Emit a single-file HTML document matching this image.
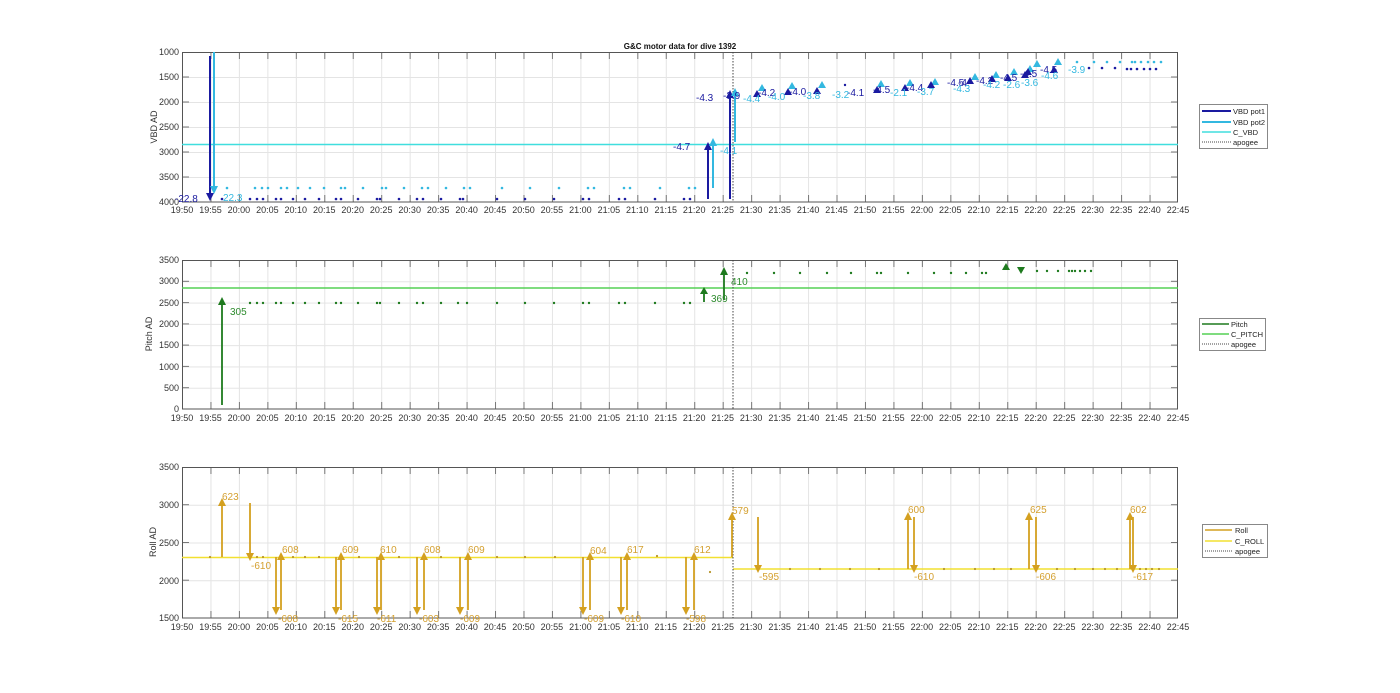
<!DOCTYPE html>
<html><head><meta charset="utf-8"><style>
html,body{margin:0;padding:0;background:#fff;}
svg{display:block;font-family:"Liberation Sans",Arial,sans-serif;}
.t{font-size:9px;fill:#333;text-anchor:middle}
.yl{font-size:9px;fill:#333;text-anchor:end}
.lg{font-size:7.5px;fill:#222}
</style></head><body>
<svg width="1400" height="693" viewBox="0 0 1400 693" xmlns="http://www.w3.org/2000/svg">
<defs>
<pattern id="vg" patternUnits="userSpaceOnUse" x="182" y="0" width="28.457" height="10"><line x1="0.5" y1="0" x2="0.5" y2="10" stroke="#e4e4e4" stroke-width="1"/></pattern>
<pattern id="h1" patternUnits="userSpaceOnUse" x="0" y="52" width="10" height="25"><line x1="0" y1="0.5" x2="10" y2="0.5" stroke="#e4e4e4"/></pattern>
<pattern id="h2" patternUnits="userSpaceOnUse" x="0" y="260" width="10" height="21.29"><line x1="0" y1="0.5" x2="10" y2="0.5" stroke="#e4e4e4"/></pattern>
<pattern id="h3" patternUnits="userSpaceOnUse" x="0" y="467" width="10" height="37.75"><line x1="0" y1="0.5" x2="10" y2="0.5" stroke="#e4e4e4"/></pattern>
<pattern id="tk" patternUnits="userSpaceOnUse" x="182" y="0" width="28.457" height="800"><line x1="0.5" y1="0" x2="0.5" y2="800" stroke="#777"/></pattern>
</defs>

<text x="680" y="49" style="font-size:8px;font-weight:bold;fill:#111" text-anchor="middle">G&amp;C motor data for dive 1392</text>

<!-- ============ TOP PLOT ============ -->
<rect x="182" y="52" width="996" height="150" fill="url(#vg)"/>
<rect x="182" y="52" width="996" height="150" fill="url(#h1)"/>
<rect x="182" y="52" width="996" height="7" fill="url(#tk)"/>
<rect x="182" y="195" width="996" height="7" fill="url(#tk)"/>
<g stroke="#777"><line x1="182" y1="77" x2="189" y2="77"/><line x1="182" y1="102" x2="189" y2="102"/><line x1="182" y1="127" x2="189" y2="127"/><line x1="182" y1="152" x2="189" y2="152"/><line x1="182" y1="177" x2="189" y2="177"/>
<line x1="1171" y1="77" x2="1178" y2="77"/><line x1="1171" y1="102" x2="1178" y2="102"/><line x1="1171" y1="127" x2="1178" y2="127"/><line x1="1171" y1="152" x2="1178" y2="152"/><line x1="1171" y1="177" x2="1178" y2="177"/></g>
<rect x="182.5" y="52.5" width="995" height="149.5" fill="none" stroke="#555"/>
<g class="yl"><text x="179" y="55">1000</text><text x="179" y="80">1500</text><text x="179" y="105">2000</text><text x="179" y="130">2500</text><text x="179" y="155">3000</text><text x="179" y="180">3500</text><text x="179" y="205">4000</text></g>
<text transform="translate(157,127) rotate(-90)" style="font-size:9px;fill:#333" text-anchor="middle">VBD AD</text>
<line x1="182" y1="144.5" x2="1178" y2="144.5" stroke="#40dede" stroke-width="1.5"/>
<line x1="733" y1="52" x2="733" y2="202" stroke="#444" stroke-dasharray="1.5,1.5"/>
<g fill="#1a1aa0">
<circle cx="222" cy="199" r="1.3"/><circle cx="250" cy="199" r="1.3"/><circle cx="257" cy="199" r="1.3"/><circle cx="263" cy="199" r="1.3"/><circle cx="276" cy="199" r="1.3"/><circle cx="281" cy="199" r="1.3"/><circle cx="293" cy="199" r="1.3"/><circle cx="305" cy="199" r="1.3"/><circle cx="319" cy="199" r="1.3"/><circle cx="336" cy="199" r="1.3"/><circle cx="341" cy="199" r="1.3"/><circle cx="358" cy="199" r="1.3"/><circle cx="377" cy="199" r="1.3"/><circle cx="380" cy="199" r="1.3"/><circle cx="399" cy="199" r="1.3"/><circle cx="417" cy="199" r="1.3"/><circle cx="423" cy="199" r="1.3"/><circle cx="441" cy="199" r="1.3"/><circle cx="460" cy="199" r="1.3"/><circle cx="463" cy="199" r="1.3"/><circle cx="497" cy="199" r="1.3"/><circle cx="525" cy="199" r="1.3"/><circle cx="554" cy="199" r="1.3"/><circle cx="583" cy="199" r="1.3"/><circle cx="589" cy="199" r="1.3"/><circle cx="619" cy="199" r="1.3"/><circle cx="625" cy="199" r="1.3"/><circle cx="655" cy="199" r="1.3"/><circle cx="684" cy="199" r="1.3"/><circle cx="690" cy="199" r="1.3"/>
<circle cx="1089" cy="68" r="1.3"/><circle cx="1102" cy="68" r="1.3"/><circle cx="1115" cy="68" r="1.3"/><circle cx="1127" cy="69" r="1.3"/><circle cx="1131" cy="69" r="1.3"/><circle cx="1137" cy="69" r="1.3"/><circle cx="1144" cy="69" r="1.3"/><circle cx="1150" cy="69" r="1.3"/><circle cx="1156" cy="69" r="1.3"/><circle cx="845" cy="85" r="1.2"/>
</g>
<g fill="#33b8e0">
<circle cx="227" cy="188" r="1.3"/><circle cx="255" cy="188" r="1.3"/><circle cx="262" cy="188" r="1.3"/><circle cx="268" cy="188" r="1.3"/><circle cx="281" cy="188" r="1.3"/><circle cx="287" cy="188" r="1.3"/><circle cx="298" cy="188" r="1.3"/><circle cx="310" cy="188" r="1.3"/><circle cx="324" cy="188" r="1.3"/><circle cx="341" cy="188" r="1.3"/><circle cx="345" cy="188" r="1.3"/><circle cx="363" cy="188" r="1.3"/><circle cx="382" cy="188" r="1.3"/><circle cx="386" cy="188" r="1.3"/><circle cx="404" cy="188" r="1.3"/><circle cx="422" cy="188" r="1.3"/><circle cx="428" cy="188" r="1.3"/><circle cx="446" cy="188" r="1.3"/><circle cx="464" cy="188" r="1.3"/><circle cx="470" cy="188" r="1.3"/><circle cx="502" cy="188" r="1.3"/><circle cx="530" cy="188" r="1.3"/><circle cx="559" cy="188" r="1.3"/><circle cx="588" cy="188" r="1.3"/><circle cx="594" cy="188" r="1.3"/><circle cx="624" cy="188" r="1.3"/><circle cx="630" cy="188" r="1.3"/><circle cx="660" cy="188" r="1.3"/><circle cx="689" cy="188" r="1.3"/><circle cx="695" cy="188" r="1.3"/>
<circle cx="1077" cy="62" r="1.3"/><circle cx="1094" cy="62" r="1.3"/><circle cx="1107" cy="62" r="1.3"/><circle cx="1120" cy="62" r="1.3"/><circle cx="1132" cy="62" r="1.3"/><circle cx="1135" cy="62" r="1.3"/><circle cx="1141" cy="62" r="1.3"/><circle cx="1148" cy="62" r="1.3"/><circle cx="1154" cy="62" r="1.3"/><circle cx="1161" cy="62" r="1.3"/>
</g>
<g stroke="#1a1aa0" stroke-width="2" fill="#1a1aa0">
<line x1="210" y1="56" x2="210" y2="194"/><polygon points="206,193 214,193 210,201" stroke="none"/>
<line x1="708" y1="199" x2="708" y2="148"/><polygon points="704,150 712,150 708,142" stroke="none"/>
<line x1="730" y1="199" x2="730" y2="96"/><polygon points="726,98 734,98 730,90" stroke="none"/>
</g>
<g stroke="#33b8e0" stroke-width="2" fill="#33b8e0">
<line x1="214" y1="52" x2="214" y2="188"/><polygon points="210,186 218,186 214,194" stroke="none"/>
<line x1="713" y1="188" x2="713" y2="144"/><polygon points="709,146 717,146 713,138" stroke="none"/>
<line x1="735" y1="142" x2="735" y2="94"/><polygon points="731,96 739,96 735,88" stroke="none"/>
</g>
<g fill="#33b8e0">
<polygon points="758,91 766,91 762,84"/><polygon points="788,89 796,89 792,82"/><polygon points="818,88 826,88 822,81"/><polygon points="877,87 885,87 881,80"/><polygon points="906,86 914,86 910,79"/><polygon points="931,85 939,85 935,78"/><polygon points="971,80 979,80 975,73"/><polygon points="992,78 1000,78 996,71"/><polygon points="1010,75 1018,75 1014,68"/><polygon points="1033,67 1041,67 1037,60"/><polygon points="1054,65 1062,65 1058,58"/><polygon points="1026,72 1034,72 1030,65"/>
</g>
<g fill="#1a1aa0">
<polygon points="753,97 761,97 757,90"/><polygon points="784,95 792,95 788,88"/><polygon points="813,94 821,94 817,87"/><polygon points="873,93 881,93 877,86"/><polygon points="901,91 909,91 905,84"/><polygon points="927,88 935,88 931,81"/><polygon points="966,84 974,84 970,77"/><polygon points="988,82 996,82 992,75"/><polygon points="1004,81 1012,81 1008,74"/><polygon points="1021,78 1029,78 1025,71"/><polygon points="1050,73 1058,73 1054,66"/><polygon points="1024,75 1032,75 1028,68"/>
</g>
<g style="font-size:10px" fill="#1a1aa0">
<text x="175" y="202">-22.8</text><text x="673" y="150">-4.7</text><text x="696" y="101">-4.3</text><text x="723" y="99">-3.9</text>
<text x="758" y="96">-4.2</text><text x="789" y="95">-4.0</text><text x="847" y="96">-4.1</text><text x="873" y="93">-4.5</text><text x="906" y="91">-4.4</text><text x="947" y="86">-4.5</text><text x="958" y="86">-4.</text><text x="976" y="84">-4.2</text><text x="1000" y="81">-4.5</text><text x="1020" y="77">-4.5</text><text x="1040" y="73">-4.5</text>
</g>
<g style="font-size:10px" fill="#33b8e0">
<text x="223" y="201">22.3</text><text x="720" y="154">-4.1</text><text x="743" y="102">-4.4</text><text x="768" y="100">-4.0</text><text x="803" y="99">-3.8</text><text x="832" y="98">-3.2</text><text x="890" y="96">-2.1</text><text x="917" y="95">-3.7</text><text x="953" y="92">-4.3</text><text x="983" y="88">-4.2</text><text x="1003" y="88">-2.6</text><text x="1021" y="86">-3.6</text><text x="1041" y="79">-4.6</text><text x="1068" y="73">-3.9</text>
</g>
<g class="t">
<text x="182" y="213">19:50</text><text x="210.5" y="213">19:55</text><text x="238.9" y="213">20:00</text><text x="267.4" y="213">20:05</text><text x="295.8" y="213">20:10</text><text x="324.3" y="213">20:15</text><text x="352.7" y="213">20:20</text><text x="381.2" y="213">20:25</text><text x="409.7" y="213">20:30</text><text x="438.1" y="213">20:35</text><text x="466.6" y="213">20:40</text><text x="495" y="213">20:45</text><text x="523.5" y="213">20:50</text><text x="551.9" y="213">20:55</text><text x="580.4" y="213">21:00</text><text x="608.9" y="213">21:05</text><text x="637.3" y="213">21:10</text><text x="665.8" y="213">21:15</text><text x="694.2" y="213">21:20</text><text x="722.7" y="213">21:25</text><text x="751.1" y="213">21:30</text><text x="779.6" y="213">21:35</text><text x="808.1" y="213">21:40</text><text x="836.5" y="213">21:45</text><text x="865" y="213">21:50</text><text x="893.4" y="213">21:55</text><text x="921.9" y="213">22:00</text><text x="950.3" y="213">22:05</text><text x="978.8" y="213">22:10</text><text x="1007.3" y="213">22:15</text><text x="1035.7" y="213">22:20</text><text x="1064.2" y="213">22:25</text><text x="1092.6" y="213">22:30</text><text x="1121.1" y="213">22:35</text><text x="1149.5" y="213">22:40</text><text x="1178" y="213">22:45</text>
</g>
<rect x="1199.5" y="104.5" width="68" height="44" fill="#fff" stroke="#888"/>
<line x1="1202" y1="111" x2="1231" y2="111" stroke="#1a1aa0" stroke-width="2"/><text class="lg" x="1233" y="114">VBD pot1</text>
<line x1="1202" y1="122" x2="1231" y2="122" stroke="#33b8e0" stroke-width="2"/><text class="lg" x="1233" y="125">VBD pot2</text>
<line x1="1202" y1="132" x2="1231" y2="132" stroke="#40dede" stroke-width="1.5"/><text class="lg" x="1233" y="135">C_VBD</text>
<line x1="1202" y1="142" x2="1231" y2="142" stroke="#444" stroke-dasharray="1,1"/><text class="lg" x="1233" y="145">apogee</text>

<!-- ============ MIDDLE PLOT ============ -->
<rect x="182" y="260" width="996" height="149" fill="url(#vg)"/>
<rect x="182" y="260" width="996" height="149" fill="url(#h2)"/>
<rect x="182" y="260" width="996" height="7" fill="url(#tk)"/>
<rect x="182" y="402" width="996" height="7" fill="url(#tk)"/>
<g stroke="#777"><line x1="182" y1="281.3" x2="189" y2="281.3"/><line x1="182" y1="302.6" x2="189" y2="302.6"/><line x1="182" y1="323.9" x2="189" y2="323.9"/><line x1="182" y1="345.1" x2="189" y2="345.1"/><line x1="182" y1="366.4" x2="189" y2="366.4"/><line x1="182" y1="387.7" x2="189" y2="387.7"/>
<line x1="1171" y1="281.3" x2="1178" y2="281.3"/><line x1="1171" y1="302.6" x2="1178" y2="302.6"/><line x1="1171" y1="323.9" x2="1178" y2="323.9"/><line x1="1171" y1="345.1" x2="1178" y2="345.1"/><line x1="1171" y1="366.4" x2="1178" y2="366.4"/><line x1="1171" y1="387.7" x2="1178" y2="387.7"/></g>
<rect x="182.5" y="260.5" width="995" height="148.5" fill="none" stroke="#555"/>
<g class="yl"><text x="179" y="263">3500</text><text x="179" y="284">3000</text><text x="179" y="306">2500</text><text x="179" y="327">2000</text><text x="179" y="348">1500</text><text x="179" y="370">1000</text><text x="179" y="391">500</text><text x="179" y="412">0</text></g>
<text transform="translate(152,334) rotate(-90)" style="font-size:9px;fill:#333" text-anchor="middle">Pitch AD</text>
<line x1="182" y1="288" x2="1178" y2="288" stroke="#55d055" stroke-width="1.6"/>
<line x1="733" y1="260" x2="733" y2="409" stroke="#444" stroke-dasharray="1.5,1.5"/>
<g fill="#1e7a1e">
<circle cx="250" cy="303" r="1.2"/><circle cx="257" cy="303" r="1.2"/><circle cx="263" cy="303" r="1.2"/><circle cx="276" cy="303" r="1.2"/><circle cx="281" cy="303" r="1.2"/><circle cx="293" cy="303" r="1.2"/><circle cx="305" cy="303" r="1.2"/><circle cx="319" cy="303" r="1.2"/><circle cx="336" cy="303" r="1.2"/><circle cx="341" cy="303" r="1.2"/><circle cx="358" cy="303" r="1.2"/><circle cx="377" cy="303" r="1.2"/><circle cx="380" cy="303" r="1.2"/><circle cx="399" cy="303" r="1.2"/><circle cx="417" cy="303" r="1.2"/><circle cx="423" cy="303" r="1.2"/><circle cx="441" cy="303" r="1.2"/><circle cx="458" cy="303" r="1.2"/><circle cx="467" cy="303" r="1.2"/><circle cx="497" cy="303" r="1.2"/><circle cx="525" cy="303" r="1.2"/><circle cx="554" cy="303" r="1.2"/><circle cx="583" cy="303" r="1.2"/><circle cx="589" cy="303" r="1.2"/><circle cx="619" cy="303" r="1.2"/><circle cx="625" cy="303" r="1.2"/><circle cx="655" cy="303" r="1.2"/><circle cx="684" cy="303" r="1.2"/><circle cx="690" cy="303" r="1.2"/>
<circle cx="747" cy="273" r="1.2"/><circle cx="774" cy="273" r="1.2"/><circle cx="800" cy="273" r="1.2"/><circle cx="827" cy="273" r="1.2"/><circle cx="851" cy="273" r="1.2"/><circle cx="877" cy="273" r="1.2"/><circle cx="881" cy="273" r="1.2"/><circle cx="908" cy="273" r="1.2"/><circle cx="934" cy="273" r="1.2"/><circle cx="951" cy="273" r="1.2"/><circle cx="966" cy="273" r="1.2"/><circle cx="982" cy="273" r="1.2"/><circle cx="986" cy="273" r="1.2"/><circle cx="1037" cy="271" r="1.2"/><circle cx="1047" cy="271" r="1.2"/><circle cx="1058" cy="271" r="1.2"/><circle cx="1069" cy="271" r="1.2"/><circle cx="1072" cy="271" r="1.2"/><circle cx="1075" cy="271" r="1.2"/><circle cx="1080" cy="271" r="1.2"/><circle cx="1085" cy="271" r="1.2"/><circle cx="1091" cy="271" r="1.2"/>
<polygon points="1002,270 1010,270 1006,263"/><polygon points="1017,267 1025,267 1021,274"/>
</g>
<g stroke="#1e7a1e" stroke-width="1.8" fill="#1e7a1e">
<line x1="222" y1="405" x2="222" y2="304"/><polygon points="218,305 226,305 222,297" stroke="none"/>
<line x1="704" y1="302" x2="704" y2="293"/><polygon points="700,294 708,294 704,287" stroke="none"/>
<line x1="724" y1="300" x2="724" y2="274"/><polygon points="720,275 728,275 724,267" stroke="none"/>
</g>
<g style="font-size:10px" fill="#2e8b2e"><text x="230" y="315">305</text><text x="711" y="302">369</text><text x="731" y="285">410</text></g>
<g class="t">
<text x="182" y="421">19:50</text><text x="210.5" y="421">19:55</text><text x="238.9" y="421">20:00</text><text x="267.4" y="421">20:05</text><text x="295.8" y="421">20:10</text><text x="324.3" y="421">20:15</text><text x="352.7" y="421">20:20</text><text x="381.2" y="421">20:25</text><text x="409.7" y="421">20:30</text><text x="438.1" y="421">20:35</text><text x="466.6" y="421">20:40</text><text x="495" y="421">20:45</text><text x="523.5" y="421">20:50</text><text x="551.9" y="421">20:55</text><text x="580.4" y="421">21:00</text><text x="608.9" y="421">21:05</text><text x="637.3" y="421">21:10</text><text x="665.8" y="421">21:15</text><text x="694.2" y="421">21:20</text><text x="722.7" y="421">21:25</text><text x="751.1" y="421">21:30</text><text x="779.6" y="421">21:35</text><text x="808.1" y="421">21:40</text><text x="836.5" y="421">21:45</text><text x="865" y="421">21:50</text><text x="893.4" y="421">21:55</text><text x="921.9" y="421">22:00</text><text x="950.3" y="421">22:05</text><text x="978.8" y="421">22:10</text><text x="1007.3" y="421">22:15</text><text x="1035.7" y="421">22:20</text><text x="1064.2" y="421">22:25</text><text x="1092.6" y="421">22:30</text><text x="1121.1" y="421">22:35</text><text x="1149.5" y="421">22:40</text><text x="1178" y="421">22:45</text>
</g>
<rect x="1199.5" y="318.5" width="66" height="32" fill="#fff" stroke="#888"/>
<line x1="1202" y1="324" x2="1229" y2="324" stroke="#1e7a1e" stroke-width="1.5"/><text class="lg" x="1231" y="327">Pitch</text>
<line x1="1202" y1="334" x2="1229" y2="334" stroke="#55d055" stroke-width="1.6"/><text class="lg" x="1231" y="337">C_PITCH</text>
<line x1="1202" y1="344" x2="1229" y2="344" stroke="#444" stroke-dasharray="1,1"/><text class="lg" x="1231" y="347">apogee</text>

<!-- ============ BOTTOM PLOT ============ -->
<rect x="182" y="467" width="996" height="151" fill="url(#vg)"/>
<rect x="182" y="467" width="996" height="151" fill="url(#h3)"/>
<rect x="182" y="467" width="996" height="7" fill="url(#tk)"/>
<rect x="182" y="611" width="996" height="7" fill="url(#tk)"/>
<g stroke="#777"><line x1="182" y1="504.7" x2="189" y2="504.7"/><line x1="182" y1="542.5" x2="189" y2="542.5"/><line x1="182" y1="580.2" x2="189" y2="580.2"/>
<line x1="1171" y1="504.7" x2="1178" y2="504.7"/><line x1="1171" y1="542.5" x2="1178" y2="542.5"/><line x1="1171" y1="580.2" x2="1178" y2="580.2"/></g>
<rect x="182.5" y="467.5" width="995" height="150.5" fill="none" stroke="#555"/>
<g class="yl"><text x="179" y="470">3500</text><text x="179" y="508">3000</text><text x="179" y="546">2500</text><text x="179" y="584">2000</text><text x="179" y="621">1500</text></g>
<text transform="translate(156,542) rotate(-90)" style="font-size:9px;fill:#333" text-anchor="middle">Roll AD</text>
<line x1="182" y1="557.5" x2="733" y2="557.5" stroke="#f2e030" stroke-width="1.5"/>
<line x1="733" y1="569" x2="1178" y2="569" stroke="#f2e030" stroke-width="1.5"/>
<line x1="733" y1="467" x2="733" y2="618" stroke="#444" stroke-dasharray="1.5,1.5"/>
<g fill="#b8952a">
<circle cx="210" cy="557" r="1.1"/><circle cx="257" cy="557" r="1.1"/><circle cx="263" cy="557" r="1.1"/><circle cx="293" cy="557" r="1.1"/><circle cx="305" cy="557" r="1.1"/><circle cx="319" cy="557" r="1.1"/><circle cx="359" cy="557" r="1.1"/><circle cx="399" cy="557" r="1.1"/><circle cx="441" cy="557" r="1.1"/><circle cx="497" cy="557" r="1.1"/><circle cx="525" cy="557" r="1.1"/><circle cx="555" cy="557" r="1.1"/><circle cx="657" cy="556" r="1.1"/><circle cx="710" cy="572" r="1.1"/>
<circle cx="790" cy="569" r="1.1"/><circle cx="820" cy="569" r="1.1"/><circle cx="850" cy="569" r="1.1"/><circle cx="879" cy="569" r="1.1"/><circle cx="944" cy="569" r="1.1"/><circle cx="975" cy="569" r="1.1"/><circle cx="994" cy="569" r="1.1"/><circle cx="1011" cy="569" r="1.1"/><circle cx="1057" cy="569" r="1.1"/><circle cx="1075" cy="569" r="1.1"/><circle cx="1093" cy="569" r="1.1"/><circle cx="1105" cy="569" r="1.1"/><circle cx="1117" cy="569" r="1.1"/><circle cx="1140" cy="569" r="1.1"/><circle cx="1146" cy="569" r="1.1"/><circle cx="1152" cy="569" r="1.1"/><circle cx="1159" cy="569" r="1.1"/>
</g>
<g stroke="#d4a020" stroke-width="1.8" fill="#d4a020">
<line x1="222" y1="557" x2="222" y2="504"/><polygon points="218,506 226,506 222,498" stroke="none"/>
<line x1="281" y1="610" x2="281" y2="558"/><polygon points="277,560 285,560 281,552" stroke="none"/>
<line x1="341" y1="610" x2="341" y2="558"/><polygon points="337,560 345,560 341,552" stroke="none"/>
<line x1="381" y1="610" x2="381" y2="558"/><polygon points="377,560 385,560 381,552" stroke="none"/>
<line x1="424" y1="610" x2="424" y2="558"/><polygon points="420,560 428,560 424,552" stroke="none"/>
<line x1="468" y1="610" x2="468" y2="558"/><polygon points="464,560 472,560 468,552" stroke="none"/>
<line x1="590" y1="610" x2="590" y2="558"/><polygon points="586,560 594,560 590,552" stroke="none"/>
<line x1="627" y1="610" x2="627" y2="558"/><polygon points="623,560 631,560 627,552" stroke="none"/>
<line x1="694" y1="610" x2="694" y2="558"/><polygon points="690,560 698,560 694,552" stroke="none"/>
<line x1="732" y1="557" x2="732" y2="518"/><polygon points="728,520 736,520 732,512" stroke="none"/>
<line x1="908" y1="569" x2="908" y2="518"/><polygon points="904,520 912,520 908,512" stroke="none"/>
<line x1="1029" y1="569" x2="1029" y2="518"/><polygon points="1025,520 1033,520 1029,512" stroke="none"/>
<line x1="1130" y1="569" x2="1130" y2="518"/><polygon points="1126,520 1134,520 1130,512" stroke="none"/>
<line x1="250" y1="503" x2="250" y2="554"/><polygon points="246,553 254,553 250,561" stroke="none"/>
<line x1="276" y1="557" x2="276" y2="608"/><polygon points="272,607 280,607 276,615" stroke="none"/>
<line x1="336" y1="557" x2="336" y2="608"/><polygon points="332,607 340,607 336,615" stroke="none"/>
<line x1="377" y1="557" x2="377" y2="608"/><polygon points="373,607 381,607 377,615" stroke="none"/>
<line x1="417" y1="557" x2="417" y2="608"/><polygon points="413,607 421,607 417,615" stroke="none"/>
<line x1="460" y1="557" x2="460" y2="608"/><polygon points="456,607 464,607 460,615" stroke="none"/>
<line x1="583" y1="557" x2="583" y2="608"/><polygon points="579,607 587,607 583,615" stroke="none"/>
<line x1="621" y1="557" x2="621" y2="608"/><polygon points="617,607 625,607 621,615" stroke="none"/>
<line x1="686" y1="557" x2="686" y2="608"/><polygon points="682,607 690,607 686,615" stroke="none"/>
<line x1="758" y1="517" x2="758" y2="566"/><polygon points="754,565 762,565 758,573" stroke="none"/>
<line x1="914" y1="517" x2="914" y2="566"/><polygon points="910,565 918,565 914,573" stroke="none"/>
<line x1="1036" y1="517" x2="1036" y2="566"/><polygon points="1032,565 1040,565 1036,573" stroke="none"/>
<line x1="1133" y1="517" x2="1133" y2="566"/><polygon points="1129,565 1137,565 1133,573" stroke="none"/>
</g>
<g style="font-size:10px" fill="#d4a030">
<text x="222" y="500">623</text><text x="251" y="569">-610</text><text x="282" y="553">608</text><text x="278" y="622">-608</text><text x="342" y="553">609</text><text x="338" y="622">-615</text><text x="380" y="553">610</text><text x="377" y="622">-611</text><text x="424" y="553">608</text><text x="419" y="622">-603</text><text x="468" y="553">609</text><text x="460" y="622">-609</text>
<text x="590" y="554">604</text><text x="584" y="622">-609</text><text x="627" y="553">617</text><text x="621" y="622">-610</text><text x="694" y="553">612</text><text x="686" y="622">-598</text>
<text x="732" y="514">579</text><text x="759" y="580">-595</text><text x="908" y="513">600</text><text x="914" y="580">-610</text><text x="1030" y="513">625</text><text x="1036" y="580">-606</text><text x="1130" y="513">602</text><text x="1133" y="580">-617</text>
</g>
<g class="t">
<text x="182" y="630">19:50</text><text x="210.5" y="630">19:55</text><text x="238.9" y="630">20:00</text><text x="267.4" y="630">20:05</text><text x="295.8" y="630">20:10</text><text x="324.3" y="630">20:15</text><text x="352.7" y="630">20:20</text><text x="381.2" y="630">20:25</text><text x="409.7" y="630">20:30</text><text x="438.1" y="630">20:35</text><text x="466.6" y="630">20:40</text><text x="495" y="630">20:45</text><text x="523.5" y="630">20:50</text><text x="551.9" y="630">20:55</text><text x="580.4" y="630">21:00</text><text x="608.9" y="630">21:05</text><text x="637.3" y="630">21:10</text><text x="665.8" y="630">21:15</text><text x="694.2" y="630">21:20</text><text x="722.7" y="630">21:25</text><text x="751.1" y="630">21:30</text><text x="779.6" y="630">21:35</text><text x="808.1" y="630">21:40</text><text x="836.5" y="630">21:45</text><text x="865" y="630">21:50</text><text x="893.4" y="630">21:55</text><text x="921.9" y="630">22:00</text><text x="950.3" y="630">22:05</text><text x="978.8" y="630">22:10</text><text x="1007.3" y="630">22:15</text><text x="1035.7" y="630">22:20</text><text x="1064.2" y="630">22:25</text><text x="1092.6" y="630">22:30</text><text x="1121.1" y="630">22:35</text><text x="1149.5" y="630">22:40</text><text x="1178" y="630">22:45</text>
</g>
<rect x="1202.5" y="524.5" width="65" height="33" fill="#fff" stroke="#888"/>
<line x1="1205" y1="530" x2="1232" y2="530" stroke="#d4a020" stroke-width="1.5"/><text class="lg" x="1235" y="533">Roll</text>
<line x1="1205" y1="541" x2="1232" y2="541" stroke="#f2e030" stroke-width="1.5"/><text class="lg" x="1235" y="544">C_ROLL</text>
<line x1="1205" y1="551" x2="1232" y2="551" stroke="#444" stroke-dasharray="1,1"/><text class="lg" x="1235" y="554">apogee</text>
</svg>
</body></html>
